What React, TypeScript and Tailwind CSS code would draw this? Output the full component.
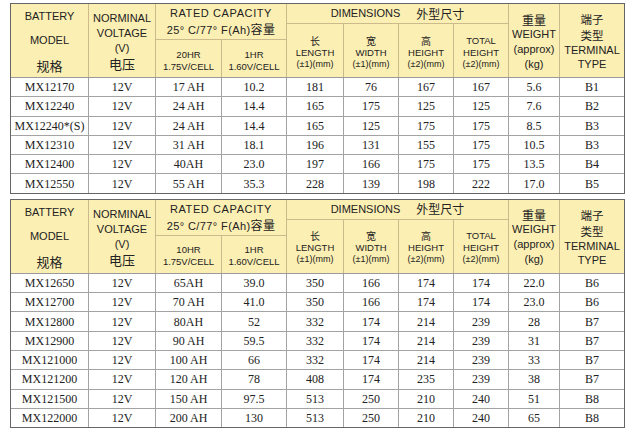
import React from 'react';

type Row = [string, string, string, string, string, string, string, string, string, string];

const table1: Row[] = [
  ['MX12170', '12V', '17 AH', '10.2', '181', '76', '167', '167', '5.6', 'B1'],
  ['MX12240', '12V', '24 AH', '14.4', '165', '175', '125', '125', '7.6', 'B2'],
  ['MX12240*(S)', '12V', '24 AH', '14.4', '165', '125', '175', '175', '8.5', 'B3'],
  ['MX12310', '12V', '31 AH', '18.1', '196', '131', '155', '175', '10.5', 'B3'],
  ['MX12400', '12V', '40AH', '23.0', '197', '166', '175', '175', '13.5', 'B4'],
  ['MX12550', '12V', '55 AH', '35.3', '228', '139', '198', '222', '17.0', 'B5'],
];

const table2: Row[] = [
  ['MX12650', '12V', '65AH', '39.0', '350', '166', '174', '174', '22.0', 'B6'],
  ['MX12700', '12V', '70 AH', '41.0', '350', '166', '174', '174', '23.0', 'B6'],
  ['MX12800', '12V', '80AH', '52', '332', '174', '214', '239', '28', 'B7'],
  ['MX12900', '12V', '90 AH', '59.5', '332', '174', '214', '239', '31', 'B7'],
  ['MX121000', '12V', '100 AH', '66', '332', '174', '214', '239', '33', 'B7'],
  ['MX121200', '12V', '120 AH', '78', '408', '174', '235', '239', '38', 'B7'],
  ['MX121500', '12V', '150 AH', '97.5', '513', '250', '210', '240', '51', 'B8'],
  ['MX122000', '12V', '200 AH', '130', '513', '250', '210', '240', '65', 'B8'],
];

const cols = 'grid-cols-[77px_66px_65px_64px_56px_54px_54px_54px_50px_64px]';
// base for header cells; direction / justify are set per cell
const head = 'bg-[#fcefb3] flex items-center text-center text-[#222]';
const cjk = "font-['Noto_Sans_CJK_SC',sans-serif]";

const Dim = ({ cn, en, tol }: { cn?: string; en: React.ReactNode; tol: string }) => (
  <div className={`${head} row-span-2 flex-col justify-center pt-[4px]`}>
    {cn ? (
      <span className={`${cjk} text-[10px] leading-[12px]`}>{cn}</span>
    ) : (
      <span className="text-[9.5px] leading-[12px]">TOTAL</span>
    )}
    <span className="text-[9.5px] leading-[11px]">{en}</span>
    <span className="text-[9px] leading-[13px] whitespace-nowrap">{tol}</span>
  </div>
);

const SpecTable = ({ hr, rows }: { hr: string; rows: Row[] }) => (
  <div className="border border-[#666] w-[615px] font-['Liberation_Sans','Noto_Sans_CJK_SC',sans-serif]">
    <div className={`grid ${cols} grid-rows-[19px_15px_37px] gap-px bg-[#cbbb8c]`}>
      <div className={`${head} row-span-3 flex-col justify-between pt-[5px] pb-[2px] text-[11px]`}>
        <span className="leading-[14px]">BATTERY</span>
        <span className="leading-[14px]">MODEL</span>
        <span className={`${cjk} text-[13px] leading-[18px]`}>规格</span>
      </div>
      <div className={`${head} row-span-3 flex-col justify-center text-[11px] pt-[2px]`}>
        <span className="leading-[15px]">NORMINAL</span>
        <span className="leading-[15px]">VOLTAGE</span>
        <span className="leading-[15px]">(V)</span>
        <span className={`${cjk} text-[13px] leading-[16px]`}>电压</span>
      </div>
      <div className={`${head} col-span-2 row-span-2 flex-col justify-center text-[11px] pt-px`}>
        <span className="leading-[15px] tracking-[0.6px]">RATED CAPACITY</span>
        <span className="leading-[15px] tracking-[0.4px]">
          25° C/77° F(Ah)<span className={`${cjk} text-[12px]`}>容量</span>
        </span>
      </div>
      <div className={`${head} col-span-4 flex-row justify-center gap-[16px] text-[11px]`}>
        <span>DIMENSIONS</span>
        <span className={`${cjk} text-[12px]`}>外型尺寸</span>
      </div>
      <div className={`${head} row-span-3 flex-col justify-center text-[11px] pt-[2px]`}>
        <span className={`${cjk} text-[12px] leading-[16px]`}>重量</span>
        <span className="leading-[13px]">WEIGHT</span>
        <span className="leading-[16px]">(approx)</span>
        <span className="leading-[15px]">(kg)</span>
      </div>
      <div className={`${head} row-span-3 flex-col justify-center text-[11px] pt-[2px]`}>
        <span className={`${cjk} text-[11.5px] leading-[16px]`}>端子</span>
        <span className={`${cjk} text-[11.5px] leading-[16px]`}>类型</span>
        <span className="leading-[14px]">TERMINAL</span>
        <span className="leading-[15px]">TYPE</span>
      </div>
      <Dim cn="长" en="LENGTH" tol="(±1)(mm)" />
      <Dim cn="宽" en="WIDTH" tol="(±1)(mm)" />
      <Dim cn="高" en="HEIGHT" tol="(±2)(mm)" />
      <Dim en="HEIGHT" tol="(±2)(mm)" />
      <div className={`${head} flex-col justify-center text-[9.5px] pt-[4px]`}>
        <span className="leading-[12px]">{hr}</span>
        <span className="leading-[12px]">1.75V/CELL</span>
      </div>
      <div className={`${head} flex-col justify-center text-[9.5px] pt-[4px]`}>
        <span className="leading-[12px]">1HR</span>
        <span className="leading-[12px]">1.60V/CELL</span>
      </div>
    </div>
    <div className="h-px bg-[#9a9a9a]" />
    <div className={`grid ${cols} auto-rows-[18.3px] gap-px bg-[#a3a3a3]`}>
      {rows.map((r, i) =>
        r.map((v, j) => (
          <div
            key={`${i}-${j}`}
            className="bg-white flex items-center justify-center text-[12px] text-[#222] font-['Liberation_Serif',serif] leading-none"
          >
            {v}
          </div>
        ))
      )}
    </div>
  </div>
);

export default function App() {
  return (
    <div className="w-[640px] h-[433px] bg-white pt-[3px] pl-[10px] flex flex-col gap-[5px]">
      <SpecTable hr="20HR" rows={table1} />
      <SpecTable hr="10HR" rows={table2} />
    </div>
  );
}
